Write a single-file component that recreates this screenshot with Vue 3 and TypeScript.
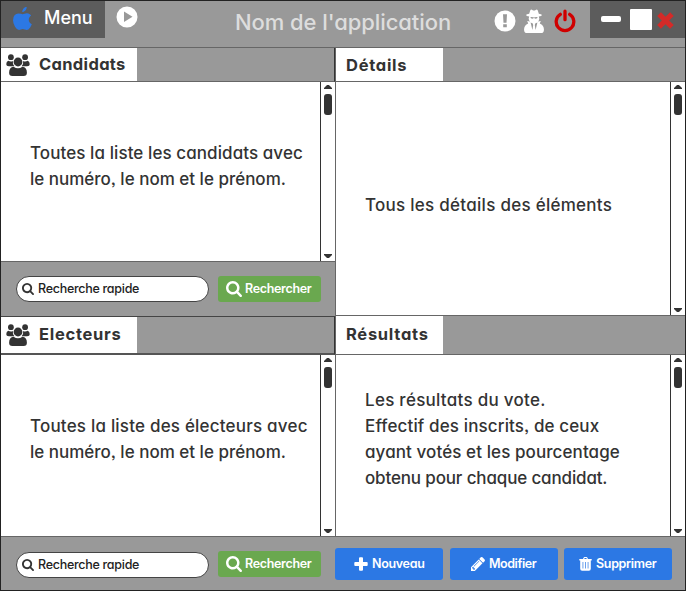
<script setup lang="ts">
interface Voters {
  id: string
  title: string
  lines: string[]
}

const candidates: Voters = {
  id: 'candidates',
  title: 'Candidats',
  lines: ['Toutes la liste les candidats avec', 'le numéro, le nom et le prénom.'],
}
const electors: Voters = {
  id: 'electors',
  title: 'Electeurs',
  lines: ['Toutes la liste des électeurs avec', 'le numéro, le nom et le prénom.'],
}
const results: string[] = [
  'Les résultats du vote.',
  'Effectif des inscrits, de ceux',
  'ayant votés et les pourcentage',
  'obtenu pour chaque candidat.',
]

const searchPath =
  'M1216 832q0-185-131.5-316.5T768 384 451.5 515.5 320 832t131.5 316.5T768 1280t316.5-131.5T1216 832zm512 832q0 52-38 90t-90 38q-54 0-90-38l-343-342q-179 124-399 124-143 0-273.5-55.5t-225-150-150-225T64 832t55.5-273.5 150-225 225-150T768 128t273.5 55.5 225 150 150 225T1472 832q0 220-124 399l343 343q37 37 37 90z'
</script>

<template>
  <div class="app">
    <header class="header">
      <div class="menu">
        <svg class="apple" viewBox="190 -115 1410 1780" preserveAspectRatio="none">
          <path d="M1585 1215q-39 125-123 250-129 196-257 196-49 0-140-32-86-32-151-32-61 0-142 33-81 34-132 34-152 0-301-259-147-261-147-503 0-228 113-374 113-144 284-144 72 0 177 30 104 30 138 30 45 0 143-34 102-34 173-34 119 0 213 65 52 36 104 100-79 67-114 118-65 94-65 207 0 124 69 223t158 126zM1209 -95q0 61-29 136-30 75-93 138-54 54-108 72-37 11-104 17 3-149 78-257 74-107 250-148 1 3 2.500 11t2.500 11q0 4 .5 10t.5 10z" />
        </svg>
        <span class="menu-text">Menu</span>
      </div>
      <svg class="play" viewBox="0 0 22 22">
        <path fill-rule="evenodd" d="M11 .5a10.500 10.500 0 1 0 0 21a10.500 10.500 0 1 0 0-21zM8 5.600L16.500 10.800 8 16z" />
      </svg>
      <h1 class="title">Nom de l'application</h1>
      <div class="status">
        <svg class="alert" viewBox="0 0 22 22">
          <circle cx="11" cy="11" r="10.500" fill="#fff" />
          <path d="M9 4.200h4l-.5 8.600h-3zM9.200 14.200h3.600v3H9.200z" fill="#999" />
        </svg>
        <svg class="spy" viewBox="0 0 20 24">
          <path d="M6.200 1.500Q7 0 8.300 1q1.700 1 3.400 0Q13 0 13.800 1.500l1 3.200q2.700.5 3.200 1.200-.3 1-3.200 1.600l.4 1.500q.4 1.700-1.200 3.500l2.800-.5-1 2.500q3.900 1.500 4.100 5.500Q20.200 24 17 24H3q-3.200 0-2.900-4 .2-4 4.100-5.500l-1-2.500 2.800.5Q4.400 10.700 4.800 9l.4-1.500Q2.300 6.900 2 5.900q.5-.7 3.200-1.200z" fill="#fff" />
          <path d="M6.300 8.300q1.800-.5 3.700.2 1.900-.7 3.700-.2-.4 1.500-2.100 1.400L10 9.100l-1.600.6q-1.700.1-2.100-1.400zM6.600 13.500l2.200 1 .4 1.500-.8 5zM13.400 13.500l-2.200 1-.4 1.500.8 5z" fill="#999" />
        </svg>
        <svg class="power" viewBox="0 0 22 24">
          <path d="M6.300 5.300A8.800 8.800 0 1 0 15.700 5.300M11 2.200v8.500" fill="none" stroke="#d00000" stroke-width="3.300" stroke-linecap="round" />
        </svg>
      </div>
      <div class="controls">
        <span class="minimize"></span>
        <span class="maximize"></span>
        <svg class="close" viewBox="0 0 17 17">
          <path d="M3.900 3.900l9.200 9.200M13.100 3.900L3.900 13.100" stroke="#d42a28" stroke-width="5.200" stroke-linecap="square" />
        </svg>
      </div>
    </header>

    <main class="panels">
      <div class="column left">
        <template v-for="group in [candidates, electors]" :key="group.id">
          <div class="tabs" :class="group.id">
            <div class="tab">
              <svg class="users" viewBox="0 0 24 22">
                <circle cx="4.900" cy="3.200" r="2.900" /><circle cx="19.100" cy="3.200" r="2.900" />
                <path d="M2.200 6.700q2.700 1.400 4.700.2-.6 3.100 1.500 5.300H3Q.3 12.200.3 10q0-2.500 1.900-3.300zM21.800 6.700q-2.700 1.400-4.700.2.600 3.100-1.500 5.300H21q2.700 0 2.700-2.200 0-2.500-1.900-3.300z" />
                <circle cx="12" cy="8" r="4.400" />
                <path d="M7.600 12.700q4.400 3 8.800 0 4.500.6 4.500 6 0 3.300-3.300 3.300H6.400q-3.300 0-3.300-3.300 0-5.400 4.500-6z" />
              </svg>
              <h2>{{ group.title }}</h2>
            </div>
          </div>
          <section class="view" :class="group.id">
            <div class="copy">
              <p v-for="(line, i) in group.lines" :key="line" :class="`${group.id}-${i}`">{{ line }}</p>
            </div>
            <div class="scrollbar"><i class="up"></i><i class="thumb"></i><i class="down"></i></div>
          </section>
          <div v-if="group.id === 'candidates'" class="search-row">
            <div class="search">
              <svg viewBox="64 128 1664 1664"><path :d="searchPath" /></svg><span>Recherche rapide</span>
            </div>
            <button class="btn green"><svg viewBox="64 128 1664 1664"><path :d="searchPath" /></svg><span>Rechercher</span></button>
          </div>
        </template>
      </div>

      <div class="column right">
        <div class="tabs details"><div class="tab"><h2>Détails</h2></div></div>
        <section class="view details">
          <div class="copy"><p class="details-0">Tous les détails des éléments</p></div>
          <div class="scrollbar"><i class="up"></i><i class="thumb"></i><i class="down"></i></div>
        </section>
        <div class="tabs results"><div class="tab"><h2>Résultats</h2></div></div>
        <section class="view results">
          <div class="copy"><p v-for="(line, i) in results" :key="line" :class="`results-${i}`">{{ line }}</p></div>
          <div class="scrollbar"><i class="up"></i><i class="thumb"></i><i class="down"></i></div>
        </section>
      </div>
    </main>

    <footer class="footer">
      <div class="search-row">
        <div class="search">
          <svg viewBox="64 128 1664 1664"><path :d="searchPath" /></svg><span>Recherche rapide</span>
        </div>
        <button class="btn green"><svg viewBox="64 128 1664 1664"><path :d="searchPath" /></svg><span>Rechercher</span></button>
      </div>
      <div class="actions">
        <button class="btn blue new">
          <svg viewBox="0 0 14 14"><path d="M5 1.200Q5 .3 6 .3h2q1 0 1 .9V5h3.800q.9 0 .9 1v2q0 1-.9 1H9v3.800q0 .9-1 .9H6q-1 0-1-.9V9H1.200q-.9 0-.9-1V6q0-1 .9-1H5z" /></svg><span>Nouveau</span>
        </button>
        <button class="btn blue edit">
          <svg viewBox="128 148 1520 1520"><path d="M491 1536l91-91-235-235-91 91v107h128v128h107zm523-928q0-22-22-22-10 0-17 7l-542 542q-7 7-7 17 0 22 22 22 10 0 17-7l542-542q7-7 7-17zm-54-192l416 416-832 832H128v-416zm683 96q0 53-37 90l-166 166-416-416 166-165q36-38 90-38 53 0 91 38l235 234q37 39 37 91z" /></svg><span>Modifier</span>
        </button>
        <button class="btn blue delete">
          <svg viewBox="0 0 13 14"><path fill-rule="evenodd" d="M4 2l.6-1.300Q4.900.1 5.500.1h2q.6 0 .9.600L9 2h3.700v1.400h-.9v8.400q0 2-1.900 2H3.100q-1.900 0-1.900-2V3.400H.3V2zm1.200 0h2.600l-.5-.9H5.700zM3.600 5v6.500h.7V5zM6.100 5v6.500h.7V5zM8.700 5v6.500h.7V5z" /></svg><span>Supprimer</span>
        </button>
      </div>
    </footer>
  </div>
</template>

<style>
body {
  margin: 0;
}
</style>

<style scoped>
* {
  box-sizing: border-box;
}
.app {
  width: 686px;
  height: 591px;
  border: 1px solid #222;
  background: #999;
  color: #333;
  font-family: Inter, "Liberation Sans", sans-serif;
  font-feature-settings: "cv11", "ss03";
  overflow: hidden;
}
h1, h2, p {
  margin: 0;
}
p, h1, h2, span {
  white-space: nowrap;
}
.header {
  display: flex;
  height: 47px;
  border-bottom: 1px solid #666;
}
.menu {
  display: flex;
  width: 104px;
  height: 37px;
  padding-left: 12px;
  background: #5c5c5c;
  color: #fff;
}
.apple {
  width: 19px;
  height: 23px;
  margin-top: 6px;
  fill: #2c78e4;
}
.menu-text {
  margin: 4px 0 0 12px;
  font-size: 18px;
  font-weight: 500;
  line-height: 26px;
}
.play {
  width: 22px;
  height: 22px;
  margin: 5px 0 0 11px;
  fill: #fff;
}
.title {
  width: 217px;
  margin: 6px 0 0 97px;
  color: #ddd;
  font-size: 22px;
  line-height: 30px;
  font-weight: 450;
  letter-spacing: -0.07px;
}
.status {
  display: flex;
  width: 95px;
  margin-left: 42px;
}
.alert {
  width: 22px;
  height: 22px;
  margin-top: 9px;
}
.spy {
  width: 20px;
  height: 24px;
  margin: 8px 0 0 8px;
}
.power {
  width: 22px;
  height: 24px;
  margin: 8px 0 0 10px;
}
.controls {
  display: flex;
  width: 95px;
  height: 37px;
  margin-left: 1px;
  padding-left: 11px;
  background: #5c5c5c;
}
.minimize {
  width: 20px;
  height: 6px;
  margin-top: 15px;
  border-radius: 2px;
  background: #fff;
}
.maximize {
  width: 22px;
  height: 21px;
  margin: 8px 0 0 9px;
  border-radius: 1px;
  background: #fff;
}
.close {
  width: 17px;
  height: 17px;
  margin: 11px 0 0 5px;
}
.panels {
  display: grid;
  grid-template-columns: 335px 349px;
  height: 489px;
}
.left {
  border-right: 1px solid #666;
}
.tabs {
  height: 34px;
  border-bottom: 1px solid #666;
}
.left .tabs {
  border-right: 1px solid #333;
}
.tabs.electors {
  height: 39px;
  border-top: 1px solid #444;
  border-bottom: 2px solid #555;
}
.tabs.results {
  height: 39px;
}
.tab {
  display: flex;
  align-items: center;
  width: 136px;
  height: 100%;
  padding-left: 5px;
  background: #fff;
}
.electors .tab,
.results .tab {
  padding-bottom: 2px;
}
.right .tab {
  width: 107px;
  padding-left: 10px;
}
.users {
  width: 24px;
  height: 22px;
  margin: 1px 9px 0 0;
  fill: #333;
}
h2 {
  font-size: 16.5px;
  line-height: 22px;
  font-weight: 700;
  letter-spacing: 0.72px;
}
.candidates h2 {
  margin-top: -1px;
  letter-spacing: 0.33px;
}
.details h2 {
  margin-top: 1px;
}
.view {
  display: flex;
  justify-content: space-between;
  height: 180px;
  border-bottom: 1px solid #666;
  background: #fff;
}
.view.electors,
.view.results {
  height: 182px;
}
.view.details {
  height: 234px;
}
.copy {
  padding: 58px 0 0 29px;
  font-size: 17px;
  font-weight: 450;
  line-height: 26px;
}
.candidates-0 {
  letter-spacing: 0.08px;
}
.electors-0 {
  letter-spacing: 0.2px;
}
.details-0,
.results-0 {
  letter-spacing: 0.27px;
}
.results-1 {
  letter-spacing: 0.13px;
}
.results-2 {
  letter-spacing: 0.09px;
}
.results-3 {
  letter-spacing: -0.15px;
}
.view.details .copy {
  padding-top: 110px;
}
.view.results .copy {
  padding-top: 32px;
}
.scrollbar {
  display: flex;
  flex-direction: column;
  align-items: center;
  width: 15px;
  border-left: 1px solid #333;
}
.up,
.down {
  width: 8px;
  height: 4px;
  background: #333;
  clip-path: polygon(38% 0, 62% 0, 100% 75%, 100% 100%, 0 100%, 0 75%);
}
.up {
  margin-top: 3px;
}
.thumb {
  width: 8px;
  height: 21px;
  margin-top: 5px;
  border-radius: 3px;
  background: #333;
}
.down {
  margin: auto 0 3px;
  transform: rotate(180deg);
}
.search-row {
  display: flex;
  align-items: flex-start;
  gap: 9px;
  width: 334px;
  height: 54px;
  padding: 14px 0 0 15px;
}
.search {
  display: flex;
  align-items: center;
  width: 193px;
  height: 26px;
  padding-left: 5px;
  border: 1px solid #444;
  border-radius: 13px;
  background: #fff;
  color: #222;
  font-size: 12.5px;
  font-weight: 450;
  letter-spacing: -0.28px;
}
.search span,
.btn span {
  padding-bottom: 2px;
}
.search svg {
  width: 12px;
  height: 12px;
  margin-right: 4px;
  fill: #333;
}
.btn {
  display: flex;
  align-items: center;
  padding: 0;
  border: 0;
  border-radius: 3px;
  color: #fff;
  font-family: inherit;
  font-feature-settings: inherit;
  font-size: 12.5px;
  font-weight: 600;
  letter-spacing: -0.32px;
}
.btn svg {
  fill: #fff;
}
.green {
  width: 103px;
  height: 26px;
  padding-left: 8px;
  background: #6aa84f;
}
.green svg {
  width: 16px;
  height: 16px;
  margin-right: 3px;
}
.footer {
  display: flex;
  height: 53px;
}
.footer .search-row {
  height: 53px;
  padding-top: 15px;
}
.footer .green {
  margin-top: -1px;
}
.actions {
  display: flex;
  padding-top: 11px;
}
.blue {
  width: 108px;
  height: 32px;
  background: #2c78e4;
}
.new {
  padding-left: 19px;
}
.edit {
  margin-left: 7px;
  padding-left: 21px;
  letter-spacing: -0.45px;
}
.delete {
  margin-left: 6px;
  padding-left: 15px;
}
.blue svg {
  width: 14px;
  height: 14px;
  margin-right: 4px;
}
.delete svg {
  width: 13px;
}
</style>
